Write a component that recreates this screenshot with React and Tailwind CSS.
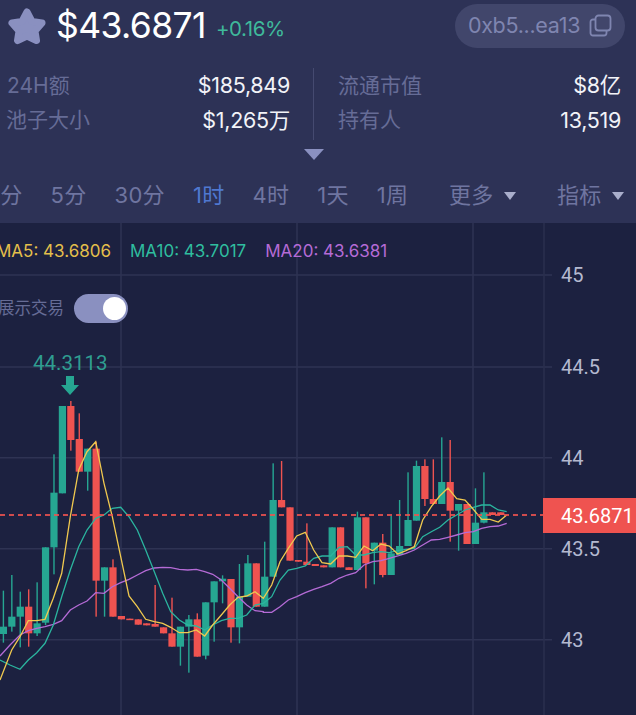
import React from "react";

const STEP = 8.43;
const X0 = 3.4;
const cx = (i) => X0 + STEP * i;
// zoom A: y = 340 + v/3 ; zoom B: y = 420 + v/3
const A = (v) => 340 + v / 3;
const B = (v) => 420 + v / 3;
const G = "#26a692";
const R = "#ef5350";

// [colour, bodyTop, bodyBottom, wickTop, wickBottom]
const candlesA = [
  [G, 860, 882, 752, 908], [G, 830, 860, 705, 875], [G, 800, 830, 755, 922], [R, 800, 880, 748, 920],
  [G, 850, 880, 727, 888], [G, 622, 848, 622, 855], [G, 458, 622, 343, 703], [G, 198, 460, 198, 460],
  [R, 198, 300, 183, 332], [R, 297, 395, 220, 395], [G, 326, 395, 326, 452], [R, 326, 722, 305, 830],
  [G, 682, 722, 682, 830], [R, 682, 830, 658, 830], [R, 828, 838, 828, 838], [R, 836, 840, 836, 840],
  [R, 838, 854, 838, 854], [R, 850, 856, 850, 856], [R, 852, 860, 735, 860], [R, 862, 880, 862, 880],
  [R, 880, 920, 773, 920], [G, 860, 920, 860, 977], [G, 838, 860, 825, 998], [R, 838, 950, 820, 950],
  [G, 787, 947, 787, 958], [G, 724, 787, 724, 905], [G, 716, 724, 706, 790], [R, 717, 862, 717, 908],
  [G, 770, 862, 672, 910], [G, 670, 770, 645, 770], [R, 670, 800, 670, 800], [G, 710, 800, 605, 800],
];
const candlesB = [
  [G, 240, 470, 130, 470], [R, 240, 262, 123, 262], [R, 262, 422, 262, 422], [R, 420, 425, 420, 425],
  [R, 425, 435, 310, 435], [R, 432, 438, 432, 438], [R, 436, 442, 436, 442], [G, 322, 442, 322, 442],
  [R, 322, 442, 322, 442], [R, 442, 450, 442, 450], [G, 292, 450, 275, 450], [R, 292, 430, 292, 505],
  [G, 368, 392, 368, 493], [R, 368, 465, 342, 472], [G, 400, 465, 288, 465], [G, 378, 405, 240, 405],
  [G, 300, 378, 157, 378], [G, 138, 302, 122, 302], [R, 138, 237, 118, 258], [R, 237, 252, 118, 252],
  [G, 186, 252, 52, 252], [R, 186, 272, 60, 365], [G, 252, 272, 252, 392], [R, 252, 372, 252, 372],
  [G, 308, 372, 205, 372], [G, 277, 308, 157, 310], [R, 277, 285, 277, 285], [R, 277, 285, 277, 285],
];

const yellowA = [[0,1020],[35,930],[60,890],[85,842],[110,842],[135,838],[160,775],[185,700],[211,530],[236,390],[261,335],[287,305],[312,430],[337,530],[362,650],[387,768],[412,800],[437,838],[463,845],[488,850],[512,862],[538,878],[563,878],[589,870],[614,888],[638,855],[664,825],[689,795],[714,772],[740,768],[765,755],[790,775]];
const yellowB = [[100,535],[125,495],[150,425],[175,385],[200,348],[226,337],[251,390],[276,428],[302,432],[327,408],[352,408],[377,412],[402,378],[428,392],[453,372],[478,378],[503,402],[528,392],[553,380],[578,300],[604,260],[629,228],[654,204],[680,236],[705,240],[730,268],[755,298],[780,298],[805,306],[830,285]];
const tealA = [[0,960],[30,975],[60,988],[85,960],[110,938],[135,910],[160,855],[185,770],[211,690],[236,620],[261,570],[287,535],[312,525],[337,505],[362,502],[387,530],[412,570],[437,630],[463,695],[488,760],[512,815],[538,840],[563,855],[589,858],[614,870],[638,855],[664,842],[689,835],[714,835],[740,825],[765,795],[790,790]];
const tealB = [[100,550],[125,530],[150,480],[175,450],[200,445],[226,438],[251,415],[276,408],[302,408],[327,382],[352,380],[377,405],[402,405],[428,398],[453,395],[478,398],[503,392],[528,388],[553,385],[578,350],[604,335],[629,322],[654,300],[680,285],[705,270],[730,262],[755,255],[780,255],[805,270],[830,275]];
const purpleA = [[0,948],[30,915],[60,885],[85,872],[110,865],[135,860],[160,853],[185,842],[211,810],[236,795],[261,783],[287,758],[312,760],[337,740],[362,728],[387,718],[412,705],[437,692],[463,684],[488,682],[512,683],[538,688],[563,690],[589,688],[614,695],[638,703],[664,720],[689,745],[714,770],[740,795],[765,812],[790,815]];
const purpleB = [[100,577],[125,577],[150,560],[175,540],[200,530],[226,518],[251,508],[276,500],[302,490],[327,475],[352,465],[377,458],[402,435],[428,425],[453,422],[478,415],[503,408],[528,400],[553,390],[578,375],[604,360],[629,358],[654,352],[680,345],[705,338],[730,335],[755,325],[780,320],[805,318],[830,310]];

const line = (a, b) =>
  [...a.map(([x, y]) => `${(x / 3).toFixed(1)},${A(y).toFixed(1)}`),
   ...b.map(([x, y]) => `${(230 + x / 3).toFixed(1)},${B(y).toFixed(1)}`)].join(" ");

function Candle({ c, i, f }) {
  const [col, t, b, wt, wb] = c;
  const x = cx(i);
  return (
    <g>
      <rect x={x - 0.7} y={f(wt)} width="1.4" height={f(wb) - f(wt)} fill={col} />
      <rect x={x - 3.6} y={f(t)} width="7.2" height={Math.max(f(b) - f(t), 1.5)} fill={col} />
    </g>
  );
}

function Chart() {
  const hs = [275, 367, 457.7, 548.7, 639.7];
  const vs = [121, 297, 473];
  const labels = [["45", 282], ["44.5", 374], ["44", 465], ["43.5", 556], ["43", 647]];
  return (
    <svg viewBox="0 223 636 492" className="absolute inset-0 h-full w-full">
      {hs.map((y) => <line key={y} x1="0" x2="552" y1={y} y2={y} stroke="#2e3353" strokeWidth="1.5" />)}
      {vs.map((x) => <line key={x} x1={x} x2={x} y1="223" y2="715" stroke="#2e3353" strokeWidth="1.5" />)}
      <line x1="544" x2="544" y1="223" y2="715" stroke="#2a2f4e" strokeWidth="1.5" />
      {candlesA.map((c, i) => <Candle key={i} c={c} i={i} f={A} />)}
      {candlesB.map((c, i) => <Candle key={i} c={c} i={i + 32} f={B} />)}
      <polyline points={line(purpleA, purpleB)} fill="none" stroke="#b56bd6" strokeWidth="1.3" />
      <polyline points={line(tealA, tealB)} fill="none" stroke="#2bb59f" strokeWidth="1.3" />
      <polyline points={line(yellowA, yellowB)} fill="none" stroke="#f0c94f" strokeWidth="1.3" />
      <line x1="0" x2="544" y1="515" y2="515" stroke="#ef5350" strokeWidth="2" strokeDasharray="5 4" opacity="0.85" />
      <polygon points="66,376 74,376 74,385 79,385 70,395 61,385 66,385" fill="#26a692" />
      <text x="33" y="370" className="font-['Roboto',sans-serif] text-[20.5px] fill-[#2f9e91]">44.3113</text>
      {labels.map(([t, y]) => (
        <text key={t} x="561" y={y} className="font-['Roboto',sans-serif] text-[20px] fill-[#b4b9d0]">{t}</text>
      ))}
    </svg>
  );
}

function Star() {
  return (
    <svg width="40" height="38" viewBox="0 0 40 38">
      <path d="M20 5 L25 14.5 L35 16 L28 24 L29.5 33.5 L20 29 L10.5 33.5 L12 24 L5 16 L15 14.5 Z"
        fill="#8a90c0" stroke="#8a90c0" strokeWidth="7" strokeLinejoin="round" />
    </svg>
  );
}

function Copy() {
  return (
    <svg width="23" height="23" viewBox="0 0 23 23" fill="none" stroke="#7f85b0" strokeWidth="1.8">
      <rect x="6.5" y="1.5" width="15" height="15" rx="3" />
      <path d="M6.5 5.5 H4 a2.5 2.5 0 0 0 -2.5 2.5 V19 a2.5 2.5 0 0 0 2.5 2.5 H15 a2.5 2.5 0 0 0 2.5 -2.5 V16.5" />
    </svg>
  );
}

const Caret = () => (
  <span className="h-0 w-0 shrink-0 border-x-[6.5px] border-t-[8px] border-x-transparent border-t-[#a9aecb]" />
);

function Stat({ label, value, labelClass = "" }) {
  return (
    <div className="flex h-[34.5px] items-center justify-between">
      <span className={"text-[21px] text-[#666c96] " + labelClass}>{label}</span>
      <span className="text-[21.5px] tracking-[-0.3px] text-[#f2f3f8]">{value}</span>
    </div>
  );
}

export default function App() {
  return (
    <div className="h-[715px] w-[636px] overflow-hidden bg-[#1c2140] font-['Inter','Noto_Sans_CJK_SC',sans-serif]">
      <div className="h-[223px] bg-[#2d3256]">
        <div className="flex h-[51px] items-center pr-[11px] pl-[7px]">
          <Star />
          <span className="ml-[9px] text-[35.5px] tracking-[-0.6px] text-white">$43.6871</span>
          <span className="mt-[8px] ml-[10px] text-[20.5px] tracking-[-0.4px] text-[#3fb99b]">+0.16%</span>
          <div className="ml-auto flex h-[44px] w-[170px] items-center justify-center gap-[9px] rounded-full bg-[#41466b]">
            <span className="text-[21.5px] tracking-[-0.3px] text-[#7f85b0]">0xb5...ea13</span>
            <Copy />
          </div>
        </div>
        <div className="mt-[17px] flex h-[72px] items-stretch">
          <div className="w-[313px] pr-[23px] pl-[7px]">
            <Stat label="24H额" value="$185,849" />
            <Stat label="池子大小" value="$1,265万" labelClass="-ml-[1px]" />
          </div>
          <div className="w-[1px] bg-[#454a70]" />
          <div className="flex-1 pr-[15px] pl-[24px]">
            <Stat label="流通市值" value="$8亿" />
            <Stat label="持有人" value="13,519" />
          </div>
        </div>
        <div className="mt-[9px] flex justify-center">
          <span className="mr-[9px] h-0 w-0 border-x-[10px] border-t-[11px] border-x-transparent border-t-[#8a90c0]" />
        </div>
        <div className="mt-[8px] flex h-[55px] items-center overflow-hidden text-[22px] tracking-[0.3px] text-[#6f75a0]">
          <div className="-ml-[9px] flex w-[438px] shrink-0 items-center gap-[28px]">
            <span>1分</span>
            <span>5分</span>
            <span>30分</span>
            <span className="text-[#4f78d0]">1时</span>
            <span>4时</span>
            <span>1天</span>
            <span>1周</span>
          </div>
          <div className="flex h-[46px] w-[86px] shrink-0 items-center gap-[10px] pl-[20px] whitespace-nowrap">
            <span className="shrink-0">更多</span><Caret />
          </div>
          <div className="ml-[42px] flex h-[46px] shrink-0 items-center gap-[10px] whitespace-nowrap">
            <span className="shrink-0">指标</span><Caret />
          </div>
        </div>
      </div>
      <div className="relative h-[492px]">
        <Chart />
        <div className="absolute top-[16px] -left-[4px] flex gap-[19px] text-[17px] whitespace-nowrap">
          <span className="text-[#e4bf4b]">MA5: 43.6806</span>
          <span className="text-[#2fbd9f]">MA10: 43.7017</span>
          <span className="text-[#b56bd6]">MA20: 43.6381</span>
        </div>
        <div className="absolute top-[71px] -left-[2px] flex items-center gap-[10px]">
          <span className="text-[16.5px] text-[#666c96]">展示交易</span>
          <div className="flex h-[29px] w-[54px] items-center justify-end rounded-full bg-[#8a90c0] pr-[2px]">
            <div className="h-[23px] w-[23px] rounded-full bg-white" />
          </div>
        </div>
        <div className="absolute top-[275px] left-[543px] flex h-[35px] w-[93px] items-center bg-[#ef5350] pl-[18px] font-['Roboto',sans-serif] text-[20px] text-white">
          43.6871
        </div>
      </div>
    </div>
  );
}
